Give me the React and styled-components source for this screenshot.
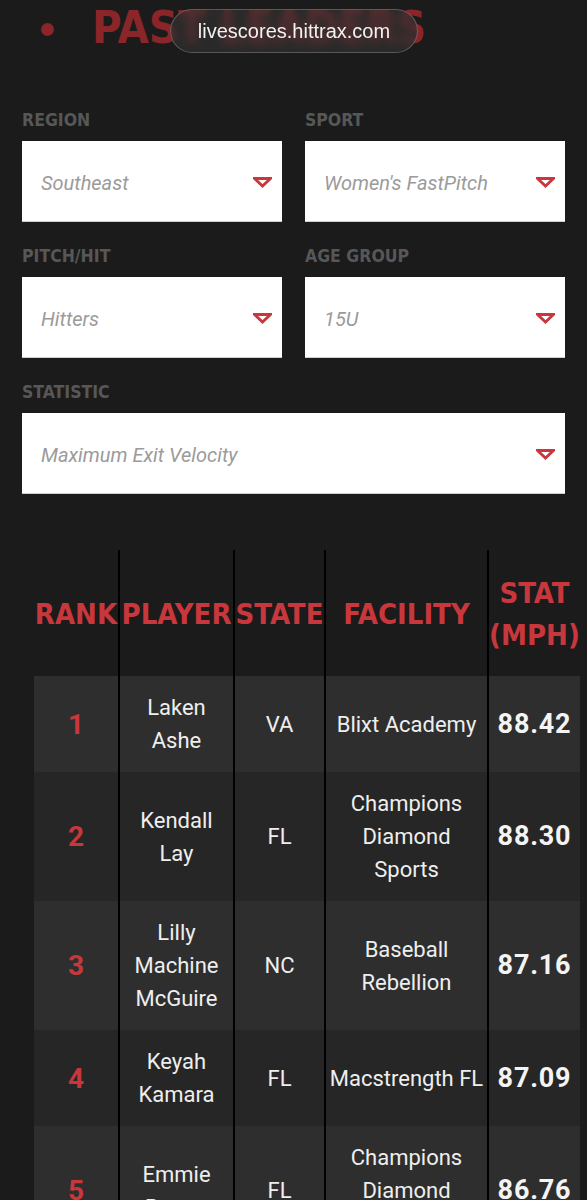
import React from 'react'
import styled, { createGlobalStyle } from 'styled-components'

const RED = '#c8373c'
const NARROW = `'Liberation Sans Narrow', 'DejaVu Sans Condensed', 'Liberation Sans', sans-serif`
const BODY = `Roboto, 'Liberation Sans', sans-serif`

const filters = [
  { label: 'REGION', value: 'Southeast' },
  { label: 'SPORT', value: "Women's FastPitch" },
  { label: 'PITCH/HIT', value: 'Hitters' },
  { label: 'AGE GROUP', value: '15U' },
  { label: 'STATISTIC', value: 'Maximum Exit Velocity', wide: true }
]

const columns = ['RANK', 'PLAYER', 'STATE', 'FACILITY', 'STAT (MPH)']

const rows = [
  { rank: 1, player: 'Laken Ashe', state: 'VA', facility: 'Blixt Academy', stat: '88.42' },
  { rank: 2, player: 'Kendall Lay', state: 'FL', facility: 'Champions Diamond Sports', stat: '88.30' },
  { rank: 3, player: 'Lilly Machine McGuire', state: 'NC', facility: 'Baseball Rebellion', stat: '87.16' },
  { rank: 4, player: 'Keyah Kamara', state: 'FL', facility: 'Macstrength FL', stat: '87.09' },
  { rank: 5, player: 'Emmie Bryant', state: 'FL', facility: 'Champions Diamond Sports', stat: '86.76' }
]

const Arrow = () =>
  <svg width='19' height='11' viewBox='0 0 19 11'>
    <polygon points='1.5,1.5 17.5,1.5 9.5,9' fill='#fff' stroke={RED} strokeWidth='2.8' />
  </svg>

export default () => {
  const fields = filters.map((f, i) =>
    <Field key={i} $wide={f.wide}>
      <Label>{f.label}</Label>
      <Select>
        <Placeholder>{f.value}</Placeholder>
        <Arrow />
      </Select>
    </Field>
  )

  const head = columns.map((c, i) =>
    <HeadCell key={c} $line={i > 0} $wrap={i === 4}>{c}</HeadCell>
  )

  const body = rows.map((r, i) =>
    <Row key={i} $alt={i % 2 === 1}>
      <Cell><Rank>{r.rank}</Rank></Cell>
      <Cell $line>{r.player}</Cell>
      <Cell $line>{r.state}</Cell>
      <Cell $line $tight>{r.facility}</Cell>
      <Cell $line><Stat>{r.stat}</Stat></Cell>
    </Row>
  )

  return (
    <Screen>
      <GlobalStyle />
      <TitleBar>
        <Bullet />
        <Title>PAST LEADERS</Title>
      </TitleBar>
      <UrlPill>livescores.hittrax.com</UrlPill>

      <Filters>
        {fields}
      </Filters>

      <Table>
        <HeadRow>
          {head}
        </HeadRow>
        {body}
      </Table>
    </Screen>
  )
}

const GlobalStyle = createGlobalStyle`
  body {
    margin: 0;
    background: #1b1b1b;
  }
`

const Screen = styled.div`
  position: relative;
  height: 1200px;
  overflow: hidden;
  background: #1b1b1b;
`

const TitleBar = styled.div`
  height: 56px;
  display: flex;
  align-items: center;
  padding-left: 41px;
  gap: 38px;
`

const Bullet = styled.div`
  width: 13px;
  height: 13px;
  border-radius: 50%;
  background: #8a2529;
  margin-top: 2px;
`

const Title = styled.div`
  font-family: ${NARROW};
  font-weight: 700;
  font-size: 45px;
  line-height: 46px;
  color: #8a2529;
  white-space: nowrap;
`

const UrlPill = styled.div`
  position: absolute;
  top: 9px;
  left: 170px;
  width: 248px;
  height: 44px;
  box-sizing: border-box;
  border-radius: 22px;
  border: 1px solid rgba(255, 255, 255, 0.22);
  background: rgba(52, 52, 52, 0.6);
  backdrop-filter: blur(5px);
  display: flex;
  align-items: center;
  justify-content: center;
  font-family: 'Liberation Sans', Roboto, sans-serif;
  font-size: 20px;
  color: #f2f2f2;
`

const Filters = styled.div`
  margin-top: 54px;
  padding: 0 22px;
  display: grid;
  grid-template-columns: 1fr 1fr;
  column-gap: 23px;
  row-gap: 24px;
`

const Field = styled.div`
  grid-column: ${p => p.$wide ? '1 / -1' : 'auto'};
`

const Label = styled.div`
  font-family: ${NARROW};
  font-weight: 700;
  font-size: 17.5px;
  line-height: 20px;
  color: #575757;
  margin-bottom: 11px;
`

const Select = styled.div`
  height: 81px;
  box-sizing: border-box;
  background: #fff;
  border-bottom: 1px solid #cfcfcf;
  display: flex;
  align-items: center;
  justify-content: space-between;
  padding: 3px 10px 0 19px;
`

const Placeholder = styled.span`
  font-family: ${BODY};
  font-style: italic;
  font-size: 20px;
  color: #9b9b9b;
`

const Table = styled.div`
  margin: 56px 7px 0 34px;
`

const Grid = styled.div`
  display: grid;
  grid-template-columns: 84px 115px 91px 163px 93px;
`

const HeadRow = styled(Grid)`
  height: 126px;
`

const Row = styled(Grid)`
  background: ${p => p.$alt ? '#262626' : '#2e2e2e'};
`

const HeadCell = styled.div`
  display: flex;
  align-items: center;
  justify-content: center;
  text-align: center;
  border-left: ${p => p.$line ? '2px solid #000' : 'none'};
  font-family: ${NARROW};
  font-weight: 700;
  font-size: 29px;
  line-height: 42px;
  color: ${RED};
  white-space: ${p => p.$wrap ? 'normal' : 'nowrap'};
  padding-top: 2px;
`

const Cell = styled.div`
  display: flex;
  align-items: center;
  justify-content: center;
  text-align: center;
  box-sizing: border-box;
  padding: 15px ${p => p.$tight ? '2px' : '10px'};
  border-left: ${p => p.$line ? '2px solid #000' : 'none'};
  font-family: ${BODY};
  font-size: 22px;
  line-height: 33px;
  color: #eeeeee;
`

const Rank = styled.span`
  font-weight: 700;
  font-size: 28px;
  color: ${RED};
`

const Stat = styled.span`
  font-weight: 700;
  font-size: 27px;
  letter-spacing: 0.8px;
  color: #f4f4f4;
`
